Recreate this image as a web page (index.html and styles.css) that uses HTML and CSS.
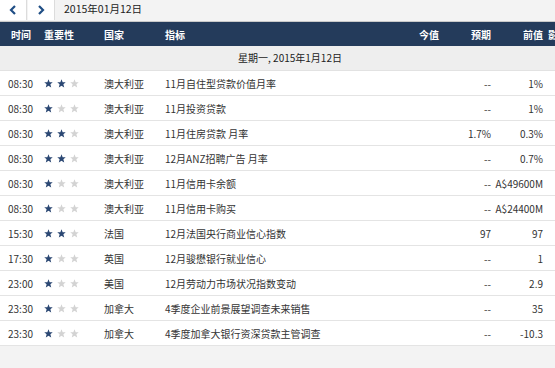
FILE: index.html
```html
<!DOCTYPE html>
<html lang="zh">
<head>
<meta charset="utf-8">
<link rel="stylesheet" href="styles.css">
</head>
<body>
<div class="topbar">
  <button class="nav-btn" aria-label="prev"><svg width="8" height="10" viewBox="0 0 8 10"><polyline points="6,1 2,5 6,9" fill="none" stroke="#1f4e85" stroke-width="2.2"/></svg></button>
  <button class="nav-btn" aria-label="next"><svg width="8" height="10" viewBox="0 0 8 10"><polyline points="2,1 6,5 2,9" fill="none" stroke="#1f4e85" stroke-width="2.2"/></svg></button>
  <span class="date">2015年01月12日</span>
</div>
<div class="table">
  <div class="row head">
    <div class="c c-time">时间</div>
    <div class="c">重要性</div>
    <div class="c">国家</div>
    <div class="c">指标</div>
    <div class="c num">今值</div>
    <div class="c num">预期</div>
    <div class="c num">前值</div>
    <div class="c last">影响</div>
  </div>
  <div class="day">星期一, 2015年1月12日</div>
  <div id="rows"></div>
</div>
<script src="app.js"></script>
</body>
</html>
```
FILE: app.js
```js
var data = [
  ["08:30",2,"澳大利亚","11月自住型贷款价值月率","","--","1%"],
  ["08:30",1,"澳大利亚","11月投资贷款","","--","1%"],
  ["08:30",2,"澳大利亚","11月住房贷款 月率","","1.7%","0.3%"],
  ["08:30",2,"澳大利亚","12月ANZ招聘广告 月率","","--","0.7%"],
  ["08:30",1,"澳大利亚","11月信用卡余额","","--","A$49600M"],
  ["08:30",1,"澳大利亚","11月信用卡购买","","--","A$24400M"],
  ["15:30",2,"法国","12月法国央行商业信心指数","","97","97"],
  ["17:30",1,"英国","12月骏懋银行就业信心","","--","1"],
  ["23:00",1,"美国","12月劳动力市场状况指数变动","","--","2.9"],
  ["23:30",1,"加拿大","4季度企业前景展望调查未来销售","","--","35"],
  ["23:30",1,"加拿大","4季度加拿大银行资深贷款主管调查","","--","-10.3"]
];
var star = '<svg class="star" width="9" height="9" viewBox="0 0 10 10"><path d="M5 0.3 L6.3 3.5 L9.7 3.7 L7.1 5.9 L8 9.4 L5 7.5 L2 9.4 L2.9 5.9 L0.3 3.7 L3.7 3.5 Z"/></svg>';
var html = "";
data.forEach(function (d) {
  var stars = "";
  for (var i = 0; i < 3; i++) {
    stars += star.replace('class="star"', 'class="star' + (i < d[1] ? ' on' : '') + '"');
  }
  html += '<div class="row">' +
    '<div class="c">' + d[0] + '</div>' +
    '<div class="c stars">' + stars + '</div>' +
    '<div class="c">' + d[2] + '</div>' +
    '<div class="c">' + d[3] + '</div>' +
    '<div class="c num">' + d[4] + '</div>' +
    '<div class="c num">' + d[5] + '</div>' +
    '<div class="c num">' + d[6] + '</div>' +
    '<div class="c last"></div>' +
    '</div>';
});
document.getElementById("rows").innerHTML = html;
```
FILE: styles.css
```css
html, body {
  margin: 0;
  padding: 0;
}
body {
  width: 555px;
  height: 368px;
  overflow: hidden;
  background: #f3f3f3;
  font-family: "Noto Sans CJK SC", "Noto Sans", sans-serif;
  font-size: 10px;
  color: #333;
}
.topbar {
  height: 21px;
  display: flex;
  align-items: stretch;
  border-bottom: 1px solid #c9c9c9;
  background: #f3f3f3;
}
.nav-btn {
  width: 27px;
  height: 20px;
  margin: 0 1px 0 0;
  padding: 0;
  border: none;
  border-right: 1px solid #dcdcdc;
  background: #fff;
  display: flex;
  align-items: center;
  justify-content: center;
}
.nav-btn svg {
  display: block;
}
.date {
  margin-left: 8px;
  line-height: 18px;
  font-size: 10.5px;
  color: #222;
}
.table {
  width: 580px;
}
.row {
  display: grid;
  grid-template-columns: 44px 60px 61px 222px 52px 52px 52px 37px;
  height: 24px;
  align-items: center;
  background: #fff;
  border-bottom: 1px solid #e4e4e4;
}
.c {
  white-space: nowrap;
  overflow: visible;
}
.row > .c:first-child {
  padding-left: 8px;
}
.num {
  text-align: right;
}
.last {
  padding-left: 5px;
}
.head {
  background: #243b5b;
  color: #fff;
  font-weight: bold;
  border-bottom: none;
}
.head > .c.c-time {
  padding-left: 11px;
}
.day {
  height: 24px;
  line-height: 24px;
  background: #eeeeee;
  text-align: center;
  border-bottom: 1px solid #e2e2e2;
  color: #222;
}
.stars {
  display: flex;
  gap: 4px;
  align-items: center;
}
.star {
  display: block;
  fill: #d3d3d3;
}
.star.on {
  fill: #2b4773;
}
```
